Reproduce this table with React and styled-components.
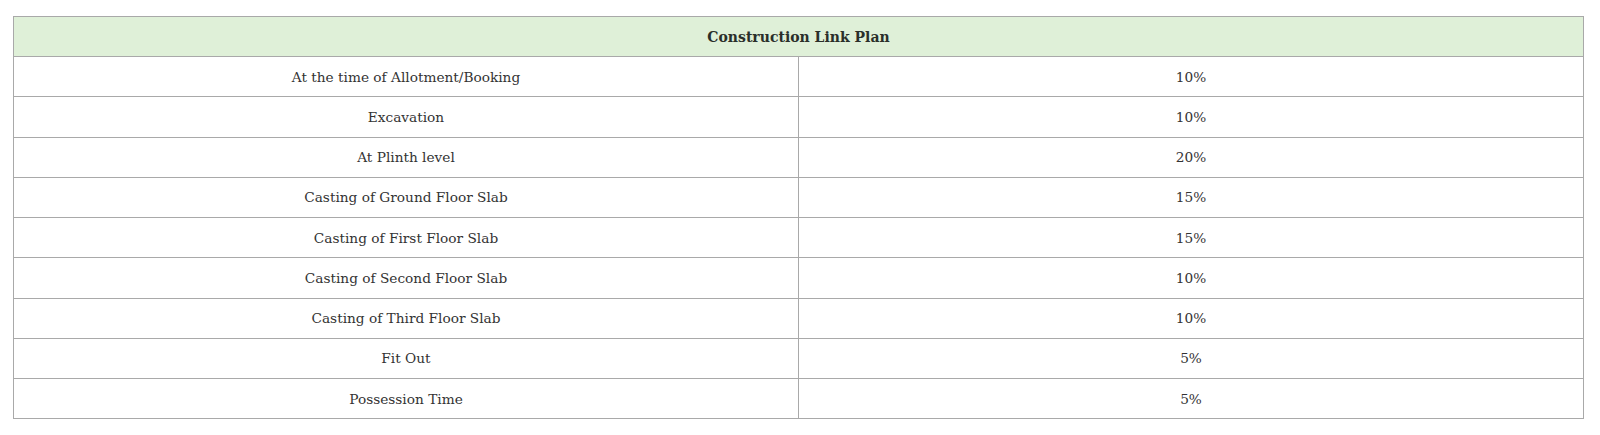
import React from "react";
import styled, { createGlobalStyle } from "styled-components";

const Global = createGlobalStyle`
  html, body { margin: 0; padding: 0; background: #ffffff; }
  body { font-family: "DejaVu Serif", "Liberation Serif", serif; }
`;

const Page = styled.div`
  padding: 16px 16px 0 13px;
`;

const Table = styled.table`
  width: 100%;
  border-collapse: collapse;
  table-layout: fixed;
`;

const HeadCell = styled.th`
  height: 39px;
  padding: 0;
  background: #dff0d8;
  border: 1px solid #a9a9a9;
  color: #2a2f2a;
  font-size: 14px;
  font-weight: 700;
  text-align: center;
  vertical-align: middle;
`;

const Cell = styled.td`
  height: 39.25px;
  padding: 0;
  border: 1px solid #a9a9a9;
  color: #333333;
  font-size: 13.7px;
  text-align: center;
  vertical-align: middle;
`;

const rows = [
  ["At the time of Allotment/Booking", "10%"],
  ["Excavation", "10%"],
  ["At Plinth level", "20%"],
  ["Casting of Ground Floor Slab", "15%"],
  ["Casting of First Floor Slab", "15%"],
  ["Casting of Second Floor Slab", "10%"],
  ["Casting of Third Floor Slab", "10%"],
  ["Fit Out", "5%"],
  ["Possession Time", "5%"],
];

export default function App() {
  return (
    <Page>
      <Global />
      <Table>
        <thead>
          <tr>
            <HeadCell colSpan={2}>Construction Link Plan</HeadCell>
          </tr>
        </thead>
        <tbody>
          {rows.map(([stage, pct]) => (
            <tr key={stage}>
              <Cell>{stage}</Cell>
              <Cell>{pct}</Cell>
            </tr>
          ))}
        </tbody>
      </Table>
    </Page>
  );
}
